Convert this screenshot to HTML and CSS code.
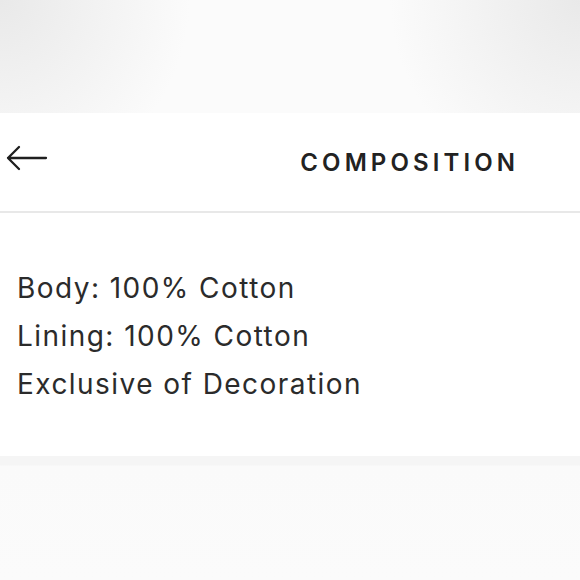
FILE: index.html
```html
<!DOCTYPE html>
<html>
<head>
<meta charset="utf-8">
<link rel="stylesheet" href="styles.css">
</head>
<body>
<div class="top"></div>
<section class="panel">
  <header class="head">
    <button class="back" aria-label="Back">
      <svg width="42" height="26" viewBox="0 0 42 26"><path d="M40 13H2M13 2L2 13l11 11" fill="none" stroke="#1f1f1f" stroke-width="2.3" stroke-linecap="round" stroke-linejoin="round"/></svg>
    </button>
    <h1 class="title">COMPOSITION</h1>
  </header>
  <div class="content">
    <p class="line">Body: 100% Cotton</p>
    <p class="line">Lining: 100% Cotton</p>
    <p class="line">Exclusive of Decoration</p>
  </div>
</section>
<div class="bottom"></div>
</body>
</html>
```
FILE: styles.css
```css
html, body {
  margin: 0;
  padding: 0;
  width: 580px;
  height: 580px;
  overflow: hidden;
  background: #f9f9f9;
  font-family: Inter, "Liberation Sans", sans-serif;
  color: #222;
}
.top {
  height: 113px;
  background:
    radial-gradient(circle at 0 0, #e9e9e9 0, rgba(240,240,240,0) 190px),
    radial-gradient(circle at 100% 0, #e9e9e9 0, rgba(240,240,240,0) 190px),
    #fbfbfb;
}
.panel {
  background: #fff;
  height: 343px;
}
.head {
  height: 98px;
  border-bottom: 2px solid #e8e8e8;
  display: flex;
  align-items: center;
  justify-content: space-between;
  padding: 0 65px 0 6px;
}
.back {
  border: 0;
  background: none;
  padding: 0;
  margin-top: -8px;
  display: flex;
}
.title {
  margin: 0;
  font-size: 24px;
  font-weight: 600;
  letter-spacing: 4.1px;
  color: #222;
  margin-right: -4px;
}
.content {
  padding: 51px 17px 0;
}
.line {
  margin: 0;
  font-size: 28px;
  line-height: 48px;
  font-weight: 400;
  letter-spacing: 1.45px;
  color: #2b2b2b;
}
.bottom {
  height: 124px;
  background: linear-gradient(#f5f5f5 0, #f5f5f5 9px, #fafafa 10px, #fbfbfb 100%);
}
```
